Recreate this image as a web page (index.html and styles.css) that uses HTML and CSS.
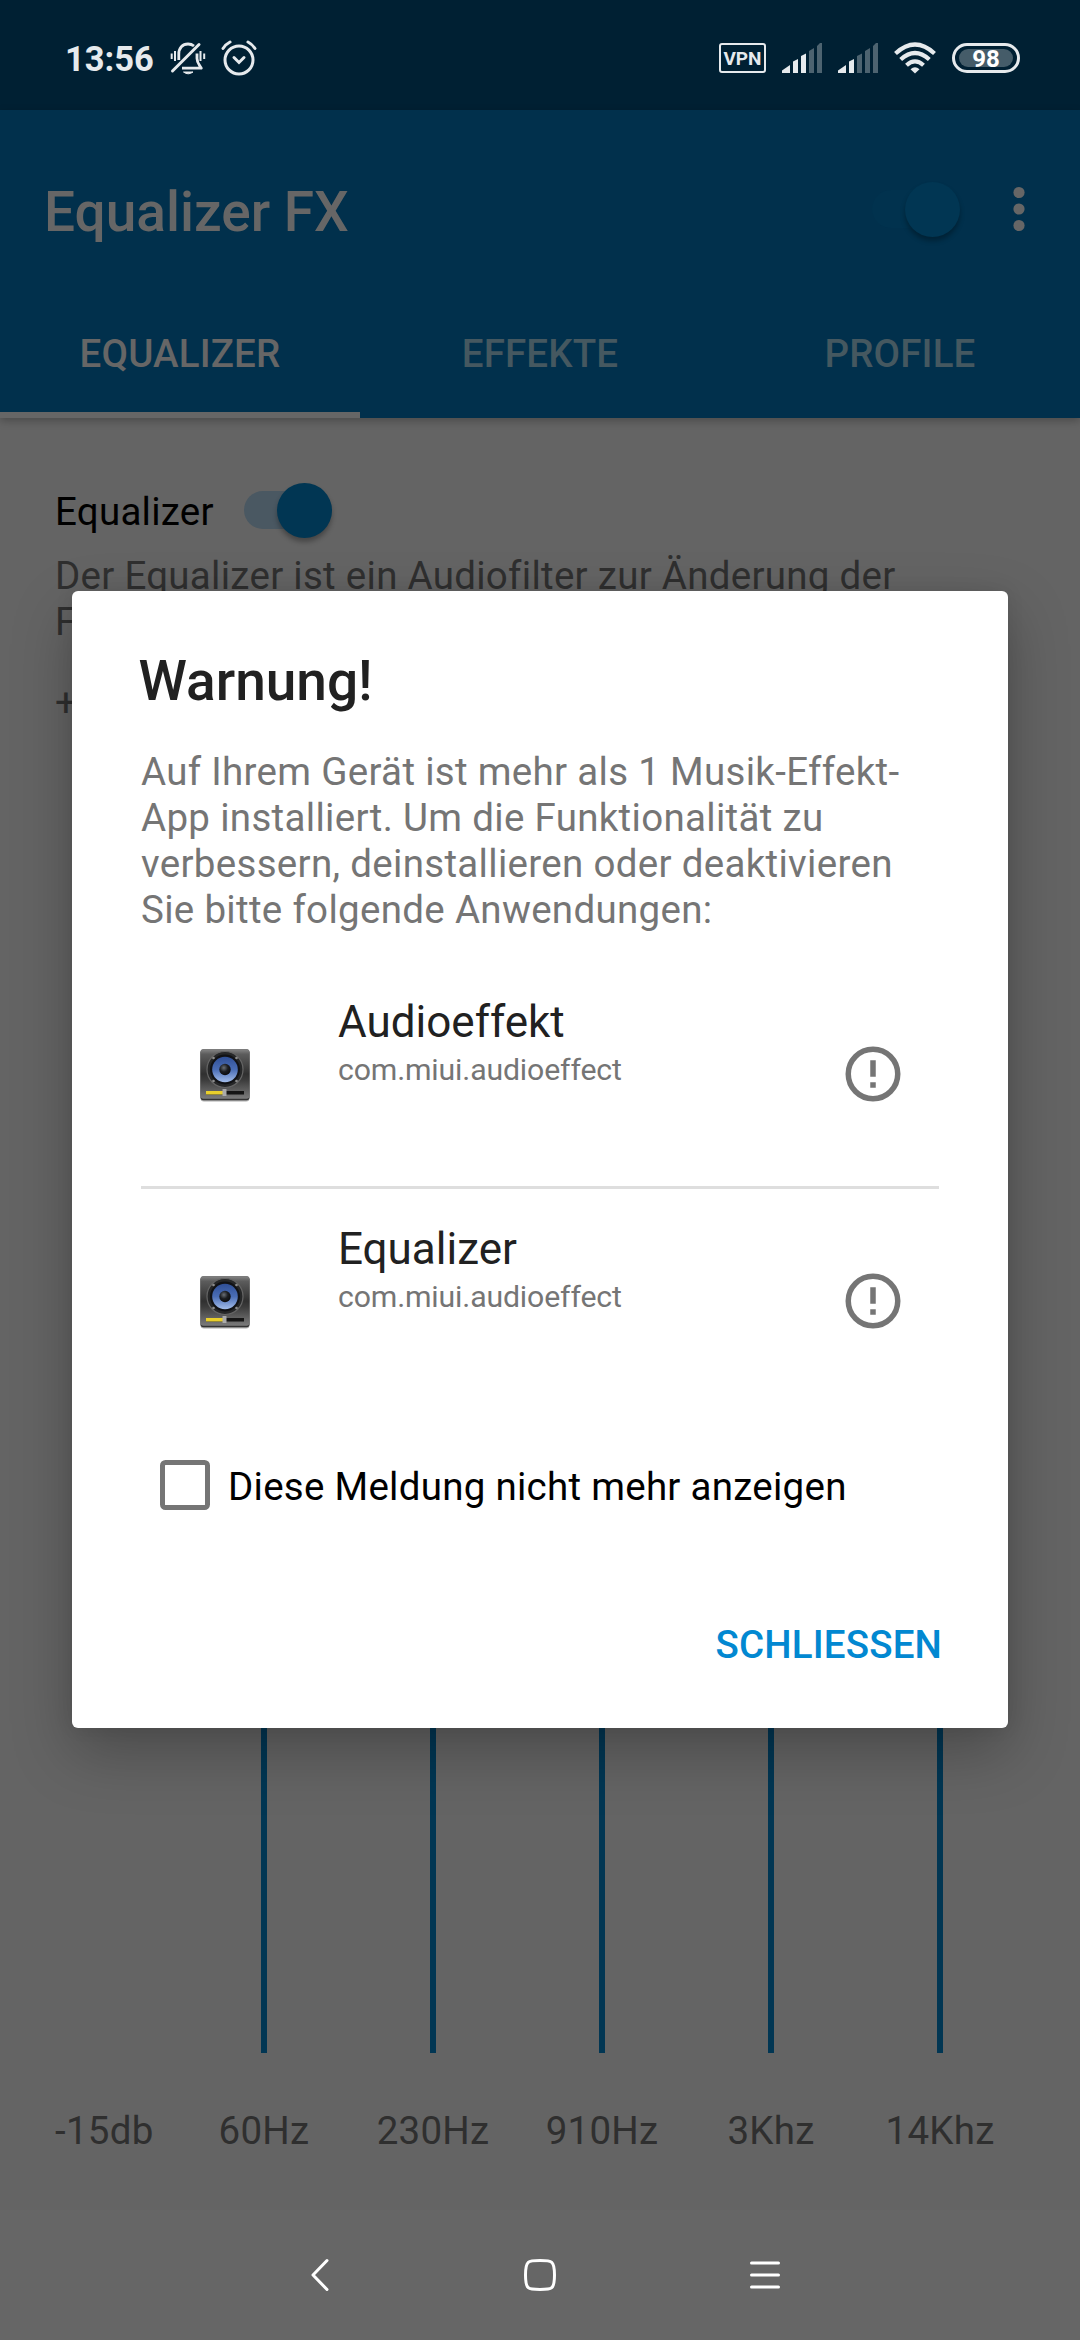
FILE: index.html
```html
<!DOCTYPE html>
<html lang="de">
<head>
<meta charset="utf-8">
<title>Equalizer FX</title>
<link rel="stylesheet" href="styles.css">
</head>
<body>
<div class="screen">
  <header class="status">
    <span class="clock">13:56</span>
    <svg class="bell" width="36" height="36" viewBox="0 0 36 36" fill="none" stroke="#e6eaed" stroke-width="2.8">
      <path d="M8.800 20V14C8.800 8 12.500 4 18 4C20.500 4 22.500 4.800 24 6M27 13.500V18.500C27 23 29.500 25 31.300 28.200H12" stroke-linejoin="round"/>
      <path d="M2.500 31L29 4.500" stroke-width="3" stroke-linecap="round"/>
      <path d="M1.700 13.500v5.500M5 11v10M30.500 11v10M34.200 13.500v5.500" stroke-width="2"/>
      <path d="M13.500 32h9.500q-4.800 3.600-9.500 0z" fill="#e6eaed" stroke-width="1"/>
    </svg>
    <svg class="alarm" width="36" height="36" viewBox="0 0 36 36" fill="none" stroke="#e6eaed" stroke-width="3" stroke-linecap="round">
      <circle cx="18" cy="20" r="14"/>
      <path d="M13 17.500l5 5 5-5"/>
      <path d="M2 8.500q3-4.500 7-6.500M34 8.500q-3-4.500-7-6.500"/>
    </svg>
    <span class="vpn">VPN</span>
    <svg class="sig1" width="40" height="30" viewBox="0 0 40 30" fill="#e6eaed">
      <path d="M0 30v-2.500L8 22v8zM11 30V18.500l5-2.500v14zM19 30V13l5-2.500V30z"/><path d="M27 30V8l5-3v25zM35 30V3l3-3h2v30z" fill="#4d6370"/>
    </svg>
    <svg class="sig2" width="40" height="30" viewBox="0 0 40 30" fill="#e6eaed">
      <path d="M0 30v-2.500L8 22v8zM11 30V18.500l5-2.500v14z"/><path d="M19 30V13l5-2.500V30zM27 30V8l5-3v25zM35 30V3l3-3h2v30z" fill="#4d6370"/>
    </svg>
    <svg class="wifi" width="42" height="32" viewBox="0 0 42 32" fill="none" stroke="#e6eaed" stroke-width="4.2">
      <path d="M1.500 11.500Q21-6.500 40.500 11.500M6.700 17.500Q21 4.500 35.300 17.500M12.500 23.200Q21 15.500 29.500 23.200"/>
      <path d="M21 31.500l-4.500-4.200q4.500-4 9 0z" fill="#e6eaed" stroke="none"/>
    </svg>
    <span class="battery"><span class="level">98</span></span>
  </header>
  <div class="appbar">
    <div class="toolbar">
      <h1>Equalizer FX</h1>
      <span class="switch dim"><span class="thumb"></span></span>
      <svg class="dots" width="12" height="46" viewBox="0 0 12 46" fill="#666"><circle cx="6" cy="6.500" r="5.600"/><circle cx="6" cy="23" r="5.600"/><circle cx="6" cy="39.500" r="5.600"/></svg>
    </div>
    <nav class="tabs"><span class="tab active">EQUALIZER</span><span class="tab">EFFEKTE</span><span class="tab">PROFILE</span></nav>
  </div>
  <main class="content">
    <div class="enable"><span class="label">Equalizer</span><span class="switch"><span class="thumb"></span></span></div>
    <p class="desc">Der Equalizer ist ein Audiofilter zur Änderung der<br>Frequenzen</p>
    <div class="bands">
      <div class="scale"><span>+</span><span>-15db</span></div>
      <div class="band"><i class="bar"></i><span>60Hz</span></div>
      <div class="band"><i class="bar"></i><span>230Hz</span></div>
      <div class="band"><i class="bar"></i><span>910Hz</span></div>
      <div class="band"><i class="bar"></i><span>3Khz</span></div>
      <div class="band"><i class="bar"></i><span>14Khz</span></div>
    </div>
  </main>
  <footer class="navbar">
    <svg class="back" width="20" height="36" viewBox="0 0 20 36"><path d="M17 3.500L3 18l14 14.500"/></svg>
    <svg width="36" height="36" viewBox="0 0 36 36"><path d="M18 3.500C30 3.500 32.500 3.500 32.500 18S30 32.500 18 32.500 3.500 32.500 3.500 18 6 3.500 18 3.500z"/></svg>
    <svg width="34" height="36" viewBox="0 0 34 36"><path d="M3.500 6h27M3.500 18h27M3.500 30h27"/></svg>
  </footer>

  <section class="dialog">
    <h2>Warnung!</h2>
    <p class="message">Auf Ihrem Gerät ist mehr als 1 Musik-Effekt-<br>App installiert. Um die Funktionalität zu<br>verbessern, deinstallieren oder deaktivieren<br>Sie bitte folgende Anwendungen:</p>
    <div class="app">
      <svg class="speaker" width="52" height="54" viewBox="0 0 52 54">
        <defs>
          <linearGradient id="case" x1="0" y1="0" x2="0" y2="1"><stop offset="0" stop-color="#858585"/><stop offset=".1" stop-color="#5c5c5c"/><stop offset=".5" stop-color="#303030"/><stop offset=".62" stop-color="#3c3c3c"/><stop offset="1" stop-color="#7c7c7c"/></linearGradient>
          <linearGradient id="cone" x1="0" y1="0" x2="0" y2="1"><stop offset="0" stop-color="#2f4f96"/><stop offset=".5" stop-color="#4a6db5"/><stop offset="1" stop-color="#a3bdea"/></linearGradient>
          <radialGradient id="cap" cx=".4" cy=".35" r=".7"><stop offset="0" stop-color="#6a6f76"/><stop offset=".5" stop-color="#1c1e22"/><stop offset="1" stop-color="#08090b"/></radialGradient>
          <g id="speaker">
            <rect x="1.500" y="2" width="49" height="51.500" rx="3.500" fill="#aaa"/>
            <rect x="1.500" y="1.300" width="49" height="51" rx="3" fill="#333"/>
            <rect x="1.500" y="1.300" width="49" height="49.500" rx="3" fill="url(#case)"/>
            <circle cx="26" cy="21.500" r="18" fill="#262728" stroke="#656565" stroke-width="1.200"/>
            <circle cx="26" cy="21.500" r="15" fill="#111215"/>
            <circle cx="26" cy="21.500" r="12.800" fill="url(#cone)"/>
            <circle cx="26" cy="21.500" r="5.700" fill="url(#cap)"/>
            <g fill="#8c8c8c"><circle cx="14.500" cy="10" r="1.300"/><circle cx="37.500" cy="10" r="1.300"/><circle cx="14.500" cy="33" r="1.300"/><circle cx="37.500" cy="33" r="1.300"/></g>
            <rect x="7" y="43" width="38" height="3.500" fill="#151515"/>
            <rect x="7" y="43" width="17" height="3.500" fill="#e9cf2c"/>
            <rect x="23.500" y="41" width="4" height="7" rx=".6" fill="#aaa"/>
          </g>
        </defs>
        <use href="#speaker"/>
      </svg>
      <div class="meta"><b>Audioeffekt</b><small>com.miui.audioeffect</small></div>
      <svg class="info" width="66" height="66" viewBox="0 0 24 24"><circle cx="12" cy="12" r="9"/><path d="M12 7v6M12 15v2"/></svg>
    </div>
    <div class="app second">
      <svg class="speaker" width="52" height="54" viewBox="0 0 52 54"><use href="#speaker"/></svg>
      <div class="meta"><b>Equalizer</b><small>com.miui.audioeffect</small></div>
      <svg class="info" width="66" height="66" viewBox="0 0 24 24"><circle cx="12" cy="12" r="9"/><path d="M12 7v6M12 15v2"/></svg>
    </div>
    <label class="check"><span class="box"></span><span class="label">Diese Meldung nicht mehr anzeigen</span></label>
    <div class="close">SCHLIESSEN</div>
  </section>
</div>
</body>
</html>
```
FILE: styles.css
```css
* { box-sizing: border-box; margin: 0; padding: 0; }
body { font-family: Roboto, sans-serif; font-size: 38.5px; line-height: 46px; color: #2f2f2f; background: #646464; }
svg { display: block; flex: none; }
.screen { position: relative; width: 1080px; height: 2340px; overflow: hidden; display: flex; flex-direction: column; background: #646464; white-space: nowrap; }

.status { height: 110px; flex: none; display: flex; align-items: center; padding: 6px 60px 0 65px; background: #002033; color: #e6eaed; }
.clock { width: 105px; font-weight: 700; font-size: 34.5px; padding-top: 2px; }
.alarm { margin-left: 15px; }
.vpn { margin-left: auto; width: 47px; height: 30px; border: 2.500px solid #e6eaed; border-radius: 3px; font-size: 19px; font-weight: 700; line-height: 27px; text-align: center; }
.sig1 { margin-left: 16px; }
.sig2 { margin-left: 16px; }
.wifi { margin-left: 16px; }
.battery { margin-left: 16px; width: 68px; height: 30px; padding: 3px 4px; border: 3px solid #e6eaed; border-radius: 15px; display: flex; }
.level { flex: 1; border-radius: 9px; background: #455c69; color: #fff; font-size: 24px; line-height: 20px; font-weight: 700; text-align: center; }

.appbar { position: relative; height: 308px; flex: none; background: #01304c; box-shadow: 0 3px 8px rgba(0,0,0,.25); display: flex; flex-direction: column; }
.toolbar { height: 198px; display: flex; align-items: center; padding: 0 55px 0 44px; }
h1 { flex: 1; color: #666; font-size: 55px; line-height: 64px; font-weight: 500; padding-top: 5px; }
.switch { width: 88px; height: 38px; border-radius: 19px; background: #4a5862; flex: none; display: flex; justify-content: flex-end; align-items: center; }
.thumb { width: 55px; height: 55px; flex: none; border-radius: 50%; background: #013653; box-shadow: 0 4px 5px rgba(0,0,0,.3); }
.dim { background: #01324e; }
.dots { margin-left: 53px; }
.tabs { display: flex; height: 110px; }
.tab { flex: 1; height: 110px; display: flex; justify-content: center; padding-top: 23px; color: #455860; font-weight: 500; letter-spacing: .15px; border-bottom: 6px solid transparent; }
.active { color: #666; border-color: #666; }

.content { flex: 1; display: flex; flex-direction: column; padding: 69px 55px 0; letter-spacing: .25px; }
.enable { display: flex; align-items: center; height: 46px; color: #000; gap: 30px; }
.label { padding-top: 4px; }
.desc { margin-top: 20px; letter-spacing: .28px; }
.bands { margin-top: 35px; display: grid; grid-template-columns: 124.500px repeat(5, 169px); height: 1474px; }
.scale, .band { display: flex; flex-direction: column; justify-content: space-between; }
.band { align-items: center; }
.bar { width: 6px; height: 1353px; background: #013653; margin-top: 20px; }

.navbar { height: 130px; flex: none; background: #666; display: grid; grid-template-columns: repeat(3, 1fr); align-items: center; justify-items: center; padding: 0 203px; }
.navbar svg { fill: none; stroke: #fff; stroke-width: 3; stroke-linecap: round; stroke-linejoin: round; }
.back { margin-left: 9px; }

.dialog { position: absolute; left: 72px; top: 591px; width: 936px; height: 1137px; background: #fff; border-radius: 6px; box-shadow: 0 24px 60px rgba(0,0,0,.26), 0 0 18px rgba(0,0,0,.08); padding: 57px 69px 0; display: flex; flex-direction: column; color: #757575; }
h2 { font-size: 55px; line-height: 66px; font-weight: 500; color: #212121; margin-left: -2.500px; }
.message { margin-top: 35px; letter-spacing: .31px; }
.app { height: 227px; margin-top: 29px; display: grid; grid-template-columns: 197px 1fr 132px; border-bottom: 3px solid #dedede; }
.second { margin-top: 0; border-color: transparent; }
.speaker { margin: 86px 0 0 58px; }
.meta { display: flex; flex-direction: column; padding-top: 34px; }
.meta b { font-weight: 400; font-size: 44px; line-height: 52px; color: #212121; }
.meta small { font-size: 30.25px; line-height: 36px; letter-spacing: -.15px; margin-top: 4px; }
.info { margin: 79px 0 0 33px; fill: none; stroke: #757575; stroke-width: 2; }
.check { display: flex; align-items: center; color: #000; gap: 18.500px; margin: 44px 0 0 19px; height: 50px; letter-spacing: .27px; }
.box { width: 49.500px; height: 49.500px; border: 5.500px solid #757575; border-radius: 5.500px; }
.close { align-self: flex-end; margin-top: 112px; color: #0288d1; font-weight: 500; letter-spacing: .15px; margin-right: -3px; }
```
